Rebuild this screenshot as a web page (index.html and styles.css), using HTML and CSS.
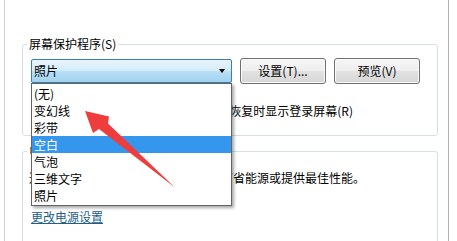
FILE: index.html
```html
<!DOCTYPE html>
<html lang="zh-CN">
<head>
<meta charset="utf-8">
<title>屏幕保护程序设置</title>
<link rel="stylesheet" href="styles.css">
</head>
<body>
<div class="window">
  <div class="group group-saver">
    <div class="legend">屏幕保护程序(S)</div>
    <div class="row-main">
      <div class="combo-wrap">
        <div class="combo"><span class="combo-text">照片</span><span class="caret"></span></div>
        <ul class="dropdown">
          <li>(无)</li>
          <li>变幻线</li>
          <li>彩带</li>
          <li class="selected">空白</li>
          <li>气泡</li>
          <li>三维文字</li>
          <li>照片</li>
        </ul>
      </div>
      <button class="btn">设置(T)...</button>
      <button class="btn">预览(V)</button>
    </div>
    <div class="row-wait">
      <span>等待(W):</span>
      <span class="spin">1</span>
      <span>分钟</span>
      <label class="check"><span class="box"></span>在恢复时显示登录屏幕(R)</label>
    </div>
  </div>
  <div class="group group-power">
    <div class="legend">电源管理</div>
    <p class="desc">通过调整显示亮度和其他电源设置以节省能源或提供最佳性能。</p>
    <a class="link" href="#">更改电源设置</a>
  </div>
</div>
<svg class="annotation" width="457" height="241" viewBox="0 0 457 241">
  <polygon points="85,111 109,116.5 108,123.5 175,187.5 99,129 93,133" fill="#ef3d3d"/>
</svg>
</body>
</html>
```
FILE: styles.css
```css
html, body {
  margin: 0;
  padding: 0;
}
body {
  position: relative;
  width: 457px;
  height: 241px;
  overflow: hidden;
  background: #ffffff;
  font-family: "Noto Sans CJK SC", "Microsoft YaHei", sans-serif;
  font-size: 12px;
  color: #000000;
}
.window {
  box-sizing: border-box;
  margin-left: 4px;
  width: 445px;
  height: 241px;
  border-left: 1px solid #d0d0d0;
  border-right: 1px solid #b2b2b2;
  padding: 44px 0 0 17px;
}
.group {
  box-sizing: border-box;
  width: 416px;
  border: 1px solid #d5dfe5;
  border-radius: 3px;
}
.group-saver {
  height: 92px;
}
.group-power {
  margin-top: 15px;
  height: 90px;
  border-bottom: none;
  border-radius: 3px 3px 0 0;
}
.legend {
  width: fit-content;
  margin: -8px 0 0 4px;
  padding: 0 2px;
  background: #ffffff;
  line-height: 14px;
}
.row-main {
  display: flex;
  align-items: flex-start;
  gap: 8px;
  margin-top: 7px;
  padding-left: 8px;
}
.combo-wrap {
  position: relative;
  margin-top: 1px;
  width: 201px;
}
.combo {
  box-sizing: border-box;
  height: 24px;
  display: flex;
  align-items: center;
  justify-content: space-between;
  padding: 0 6px 0 2px;
  border: 1px solid #3c7fb1;
  border-radius: 2px;
  background: linear-gradient(#e8f4fb 0%, #d5ecfa 48%, #b8dff6 52%, #a2d2ef 100%);
  line-height: 16px;
}
.caret {
  width: 0;
  height: 0;
  border-left: 3.5px solid transparent;
  border-right: 3.5px solid transparent;
  border-top: 4px solid #000000;
}
.dropdown {
  position: absolute;
  z-index: 10;
  top: 100%;
  left: 0;
  box-sizing: border-box;
  width: 201px;
  margin: 0;
  padding: 1px 0;
  list-style: none;
  background: #ffffff;
  border: 1px solid #646464;
  box-shadow: 2px 2px 3px rgba(0, 0, 0, 0.35);
}
.dropdown li {
  height: 17px;
  line-height: 17px;
  padding-left: 2px;
}
.dropdown li.selected {
  background: #3596ee;
  color: #ffffff;
}
.btn {
  box-sizing: border-box;
  width: 86px;
  height: 26px;
  padding: 0;
  border: 1px solid #707070;
  border-radius: 3px;
  background: linear-gradient(#f6f6f6 0%, #eeeeee 48%, #e2e2e2 52%, #d6d6d6 100%);
  box-shadow: inset 0 0 0 1px #fbfbfb;
  font-family: inherit;
  font-size: 12px;
  line-height: 16px;
  color: #000000;
}
.row-wait {
  display: flex;
  align-items: center;
  gap: 6px;
  height: 22px;
  margin-top: 16px;
  padding: 0 84px 0 8px;
  line-height: 16px;
}
.spin {
  box-sizing: border-box;
  width: 46px;
  height: 21px;
  border: 1px solid #abadb3;
  padding-left: 3px;
  line-height: 19px;
}
.check {
  display: flex;
  align-items: center;
  gap: 4px;
  margin-left: auto;
}
.box {
  box-sizing: border-box;
  width: 13px;
  height: 13px;
  border: 1px solid #8e8f8f;
  background: #f4f4f4;
}
.desc {
  margin: 12px 0 0 6px;
  line-height: 16px;
}
.link {
  display: inline-block;
  margin: 23px 0 0 8px;
  line-height: 16px;
  color: #1f5f8c;
  text-decoration: underline;
}
.annotation {
  position: absolute;
  z-index: 20;
  top: 0;
  left: 0;
  pointer-events: none;
}
```
